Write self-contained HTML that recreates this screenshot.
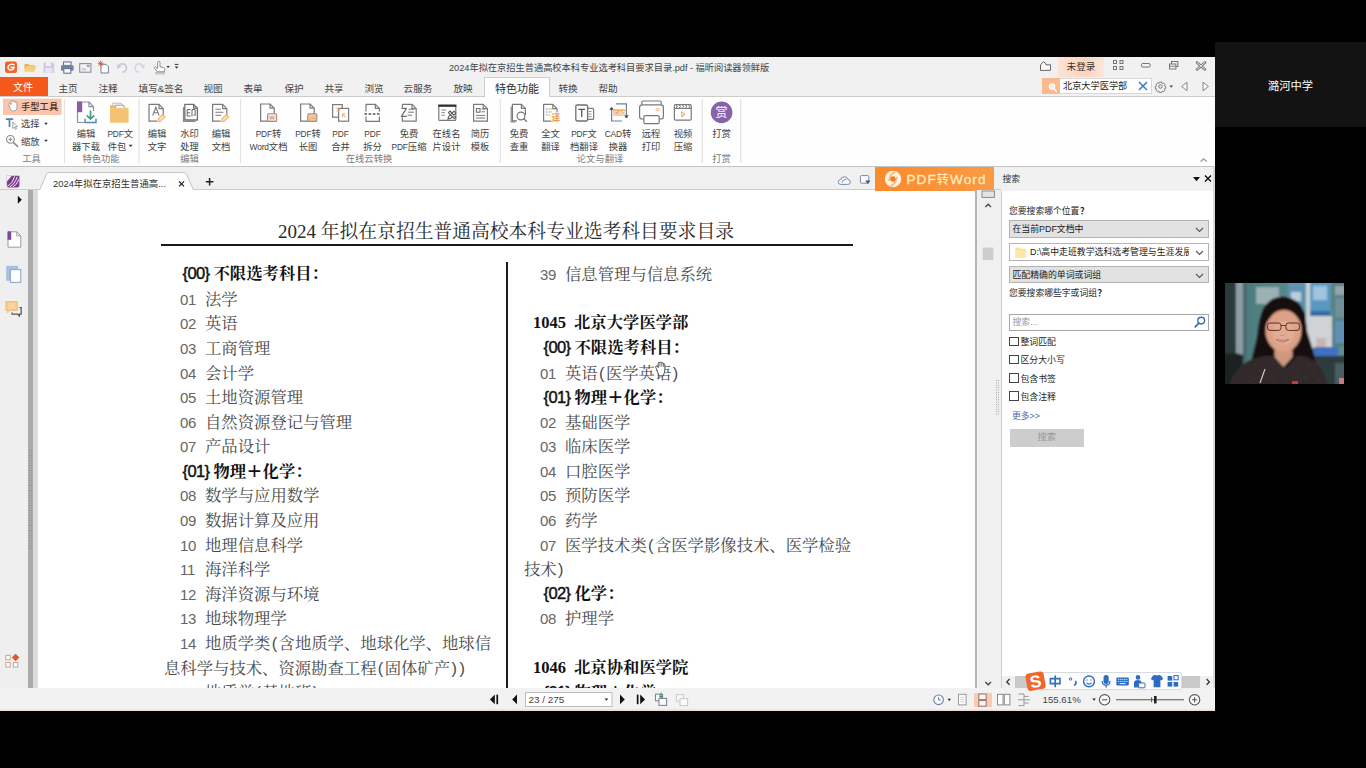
<!DOCTYPE html>
<html lang="zh-CN"><head><meta charset="utf-8"><title>2024年拟在京招生普通高校本科专业选考科目要求目录.pdf - 福昕阅读器领鲜版</title>
<style>
*{box-sizing:border-box;margin:0;padding:0}
html,body{width:1366px;height:768px;overflow:hidden;background:#000}
body{position:relative;font-family:"Liberation Sans","Noto Sans CJK SC",sans-serif;font-size:9.5px;color:#3a3a3a}
.a{position:absolute}
svg{position:absolute;overflow:visible}
#app{left:0;top:57px;width:1215px;height:654px;background:#f3f3f3;overflow:hidden}
#titlebar{left:0;top:0;width:1215px;height:20px;background:#f1f1f1}
#tabs{left:0;top:20px;width:1215px;height:19px;background:#f1f1f1}
#ribbon{left:0;top:39px;width:1215px;height:71px;background:#fefefe;border-top:1px solid #cbcbcb;border-bottom:1px solid #c4c4c4}
#doctabs{left:0;top:110px;width:1215px;height:23px;background:#f0f0f0}
#leftpanel{left:0;top:133px;width:28px;height:498px;background:#efefef}
#split1{left:28px;top:133px;width:5px;height:498px;background:#ababab}
#split2{left:33px;top:133px;width:5px;height:498px;background:#dcdcdc}
#page{left:38px;top:133px;width:937px;height:498px;background:#fff;overflow:hidden}
#status{left:0;top:631px;width:1215px;height:23px;background:#f2f2f2}
#name{left:1215px;top:42px;width:151px;height:85px;background:#131313;color:#fff;font-size:11.3px;text-align:center;line-height:88px}
#photo{left:1225px;top:283px;width:119px;height:101px;background:#5c8386;overflow:hidden}
.t{position:absolute;white-space:nowrap;line-height:1}
</style></head><body>
<div id="app" class="a">
<style>
#titlebar .ttl{left:449px;top:6.800px;font-size:9.280px;color:#444;letter-spacing:-0.05px}
#tabs .tb{position:absolute;top:1.5px;height:19px;line-height:20px;font-size:9.6px;color:#444;white-space:nowrap;transform:translateX(-50%)}
#filetab{left:0;top:0;width:48px;height:19px;background:#f4581b;color:#fff;font-size:10px;text-align:center;line-height:22px;padding-right:2px}
#acttab{left:484px;top:0;width:66px;height:20px;background:#fefefe;border:1px solid #cdcdcd;border-bottom:none;font-size:11px;color:#2c2c2c;text-align:center;line-height:22px;z-index:3}
#login{left:1058px;top:0;width:46px;height:20px;background:linear-gradient(90deg,#fce3d4,#fbd5c0 60%,#fce6da);font-size:9.6px;color:#333;text-align:center;line-height:20px}
#sbox{left:1042px;top:1px;width:110px;height:16px;background:#fbb98c}
#sbox .in{left:18px;top:0;width:92px;height:16px;background:#fff;border:1px solid #d8d8d8;border-left:none;font-size:9.200px;color:#222;line-height:15px;padding-left:3px;white-space:nowrap}
</style>
<div id="titlebar" class="a">
<svg width="190" height="20" viewBox="0 0 190 20" style="left:0;top:0">
 <!-- foxit logo -->
 <rect x="5" y="4.5" width="12" height="11.5" rx="2.2" fill="#f0652a"/>
 <path d="M14 7.6 C11.5 6.6 8.2 7.6 8 10.4 C7.9 12.6 10.4 13.6 12.6 12.6 C13.6 12.1 14 11.2 14 10.2 L11 10.4" fill="none" stroke="#fff" stroke-width="1.5" stroke-linecap="round"/>
 <!-- folder -->
 <path d="M24.5 7 h4 l1.2 1.3 h5.2 v1.4 h-8.6 l-1.8 4.8 z" fill="#e9b24f"/>
 <path d="M26.4 9.6 h10 l-2 5.2 h-9.9 z" fill="#f7cf7c"/>
 <!-- save -->
 <path d="M43.5 5.5 h9.3 l1.4 1.4 v8.8 h-10.7 z" fill="#cfc9e6"/>
 <rect x="45.8" y="5.5" width="5.2" height="3.6" fill="#f0eef8"/><rect x="45.3" y="11" width="7" height="4.7" fill="#e9e6f4"/>
 <!-- print -->
 <rect x="63.5" y="5" width="7.6" height="3.4" fill="#fff" stroke="#61779b" stroke-width="1.1"/>
 <rect x="61" y="8.2" width="12.6" height="5.6" rx="1" fill="#6e83a6"/>
 <rect x="63.8" y="11.6" width="7" height="4.6" fill="#fff" stroke="#61779b" stroke-width="1.1"/>
 <!-- mail/scan -->
 <rect x="79.7" y="6.6" width="11.2" height="8.6" fill="#f3f3f3" stroke="#8a8f99" stroke-width="1.1"/>
 <rect x="86.8" y="7.8" width="2.8" height="2.2" fill="#9aa0aa"/><rect x="81.6" y="11.2" width="4.6" height="2.2" fill="#c9ccd2"/>
 <!-- new doc with star -->
 <path d="M101 7.3 h5 l2.4 2.4 v6.3 h-7.4 z" fill="#fff" stroke="#7b7b86" stroke-width="1"/>
 <path d="M100.6 3.6 v6 M97.8 6.6 h5.6 M98.6 4.6 l4 4 M102.6 4.6 l-4 4" stroke="#e8553a" stroke-width="0.9"/>
 <!-- undo -->
 <path d="M118.6 9.8 C119.6 6 125.4 5.8 126.4 10 C126.9 12.6 125 14.8 122.4 15.4" fill="none" stroke="#c5ccd8" stroke-width="1.7"/>
 <path d="M116.4 7.2 l1.2 4.8 l4 -2.6 z" fill="#c5ccd8"/>
 <!-- redo -->
 <path d="M143 9.8 C142 6 136.2 5.8 135.2 10 C134.7 12.6 136.6 14.8 139.2 15.4" fill="none" stroke="#d3d9e2" stroke-width="1.7"/>
 <path d="M145.2 7.2 l-1.2 4.8 l-4 -2.6 z" fill="#d3d9e2"/>
 <!-- hand pointer -->
 <path d="M157.6 5.4 c0-1.4 2.4-1.4 2.4 0 v4.4 l3.6 .8 c1 .3 1.4 1 1.2 2 l-.6 2.2 h-6.8 l-3-3.600 c-.6-.9 .6-1.800 1.400-1.100 l1.800 1.500 z" fill="#fbfbfb" stroke="#8b8b8b" stroke-width="1"/>
 <rect x="155.800" y="15.400" width="8.600" height="1.600" fill="#d9d9d9" stroke="#9a9a9a" stroke-width=".5"/>
 <path d="M166.400 9 h3.400 l-1.700 2.100 z" fill="#333"/>
 <path d="M174.800 7.400 h3.600" stroke="#333" stroke-width="1"/><path d="M174.800 9.500 h3.600 l-1.800 2.200 z" fill="#333"/>
</svg>
<div class="t ttl">2024年拟在京招生普通高校本科专业选考科目要求目录.pdf - 福昕阅读器领鲜版</div>
<div id="login" class="a">未登录</div>
<svg width="180" height="20" viewBox="0 0 180 20" style="left:1035px;top:0">
 <path d="M5.500 8 l2.800-3.200 l2.600 1.800 v1.200 h4.600 v5.600 h-10 z" fill="#fdfdfd" stroke="#666" stroke-width="1"/>
 <g fill="none" stroke="#777" stroke-width="1"><rect x="78.500" y="3.500" width="3" height="3"/><rect x="85" y="3.500" width="3" height="3"/><rect x="78.500" y="9.500" width="3" height="3"/><rect x="85" y="9.500" width="3" height="3"/></g>
 <rect x="106.500" y="6.500" width="8.600" height="3.600" rx="1.200" fill="none" stroke="#777" stroke-width="1"/>
 <g fill="#f1f1f1" stroke="#777" stroke-width="1"><rect x="136.500" y="4.500" width="6.400" height="5"/><rect x="134.500" y="7" width="6.400" height="5"/></g>
 <path d="M135 9.300 h5.500" stroke="#777" stroke-width=".9"/>
</svg>
<svg width="14" height="14" viewBox="0 0 14 14" style="left:1194px;top:1.500px">
 <path d="M3 3.400 l8 7 M11 3.400 l-8 7" stroke="#777" stroke-width="2.600" stroke-linecap="round"/><path d="M3 3.400 l8 7 M11 3.400 l-8 7" stroke="#f1f1f1" stroke-width=".9" stroke-linecap="round"/>
</svg>
</div>
<div id="tabs" class="a">
<div id="filetab" class="a">文件</div>
<div class="tb" style="left:68px">主页</div>
<div class="tb" style="left:108px">注释</div>
<div class="tb" style="left:161px">填写&amp;签名</div>
<div class="tb" style="left:213px">视图</div>
<div class="tb" style="left:253px">表单</div>
<div class="tb" style="left:294px">保护</div>
<div class="tb" style="left:334px">共享</div>
<div class="tb" style="left:374px">浏览</div>
<div class="tb" style="left:418px">云服务</div>
<div class="tb" style="left:463px">放映</div>
<div id="acttab" class="a">特色功能</div>
<div class="tb" style="left:568px">转换</div>
<div class="tb" style="left:608px">帮助</div>
<div id="sbox" class="a">
 <svg width="18" height="16" viewBox="0 0 18 16" style="left:0;top:0"><circle cx="10" cy="8.600" r="2.700" fill="#fde9dc" stroke="#fff" stroke-width="1.100"/><path d="M12 10.800 l2.400 2.600" stroke="#fff" stroke-width="1.400" stroke-linecap="round"/></svg>
 <div class="in a">北京大学医学部</div>
 <svg width="12" height="12" viewBox="0 0 12 12" style="left:95px;top:2px"><path d="M2 2 l8 8 M10 2 l-8 8" stroke="#3b78c4" stroke-width="1.500"/></svg>
</div>
<svg width="60" height="18" viewBox="0 0 60 18" style="left:1153px;top:0px">
 <!-- gear -->
 <g transform="translate(7.500,9.500)" fill="none" stroke="#777" stroke-width="1"><circle r="1.700"/><path d="M-1.200-4.800 h2.400 l.5 1.500 l1.500-.5 l1.700 1.700 l-.7 1.400 l1.400 .6 v2.200 l-1.400 .5 l.6 1.500 l-1.700 1.600 l-1.400-.7 l-.5 1.500 h-2.400 l-.5-1.500 l-1.500 .7 l-1.700-1.700 l.7-1.400 l-1.500-.5 v-2.300 l1.500-.5 l-.7-1.500 l1.700-1.600 l1.500 .6 z" transform="scale(.92)"/></g>
 <path d="M16.500 8.500 h3.600 l-1.800 2.200 z" fill="#444"/>
 <path d="M34 5.200 v8.600 l-5.400-4.300 z" fill="#fafafa" stroke="#888" stroke-width="1"/>
 <path d="M50 5.200 v8.600 l5.400-4.300 z" fill="#fafafa" stroke="#888" stroke-width="1"/>
</svg>
</div>
<div id="ribbon" class="a"></div>
<svg width="1215" height="70" viewBox="0 0 1215 70" style="left:0;top:39px">
<rect x="3" y="2.600" width="58.600" height="16.400" fill="#f9c5ac"/>
<path d="M9.200 9.600 c-1.400-1.800 .6-2.800 1.500-1.500 l.3 .4 v-3 c0-1.200 1.500-1.200 1.600 0 c.2-1.100 1.600-1 1.600 .2 c.3-.9 1.500-.7 1.500 .4 v.600 c.3-.8 1.300-.6 1.300 .4 v4 c0 2.400-1 4-3.600 4 c-2.200 0-3-1.400-4.200-5.500 z" fill="#fdfdfd" stroke="#9a948f" stroke-width=".9" stroke-linejoin="round"/>
<path d="M5.800 23.200 h7.400 M9.500 23.200 v7.800" stroke="#5680ad" stroke-width="1.700" fill="none"/>
<path d="M12.800 26 v6.600 l1.600-1.500 l1.100 2.300 l1-.5 l-1.100-2.200 h2.100 z" fill="#fff" stroke="#8b8b8b" stroke-width=".8" stroke-linejoin="round"/>
<path d="M44.200 26.800 h3.600 l-1.800 2.200 z M44.200 43.800 h3.600 l-1.800 2.200 z" fill="#333"/>
<circle cx="10.400" cy="43.400" r="3.900" fill="#fdfdfd" stroke="#8b8b8b" stroke-width="1.100"/><path d="M8.400 43.400 h4 M10.400 41.400 v4" stroke="#8b8b8b" stroke-width="1"/><path d="M13.300 46.400 l4.300 4" stroke="#8b8b8b" stroke-width="1.500" stroke-linecap="round"/>
<path d="M64.5 3 V67" stroke="#e3e3e3" stroke-width="1.200"/>
<path d="M139.0 3 V67" stroke="#e3e3e3" stroke-width="1.200"/>
<path d="M240.5 3 V67" stroke="#e3e3e3" stroke-width="1.200"/>
<path d="M500.3 3 V67" stroke="#e3e3e3" stroke-width="1.200"/>
<path d="M702.3 3 V67" stroke="#e3e3e3" stroke-width="1.200"/>
<path d="M740.7 3 V67" stroke="#e3e3e3" stroke-width="1.200"/>
<path d="M77.5 6.0 h11.4 l4.6 4.6 v15.9 h-16.0 z" fill="#fefefe" stroke="#8f8f9a" stroke-width="1.2" stroke-linejoin="round"/><path d="M88.9 6.0 v4.6 h4.6" fill="none" stroke="#8f8f9a" stroke-width="1.2" stroke-linejoin="round"/>
<rect x="77" y="5.600" width="5.200" height="10.600" fill="#8a5ca9"/>
<rect x="84" y="15" width="13" height="12.500" fill="#fefefe"/>
<path d="M90.500 14.600 v8 M86.800 19.400 l3.700 3.600 l3.700-3.600" fill="none" stroke="#3f9c8c" stroke-width="1.700"/>
<path d="M85 22.800 v3.700 h11 v-3.700" fill="none" stroke="#5f86a8" stroke-width="1.500"/>
<path d="M112.500 8.800 v-1.600 h8.600 l3 3 v3" fill="#fefefe" stroke="#b9b9b9" stroke-width="1"/>
<path d="M115 11 v-1.800 h7.400 l2.700 2.700 v3" fill="#fefefe" stroke="#9a9a9a" stroke-width="1"/>
<path d="M110 9.600 h5 l1.600 2.200 h11.800 v14.800 h-18.400 z" fill="#f5cb80"/>
<rect x="110" y="13.300" width="18.400" height="13.300" fill="#f3c373"/>
<path d="M110 9.600 h5 l1.600 2.200 h-6.600 z" fill="#e9b65e"/>
<path d="M149.0 8.4 h10.0 l4.2 4.2 v12.6 h-14.2 z" fill="#fefefe" stroke="#7a7a7a" stroke-width="1.2" stroke-linejoin="round"/><path d="M159.0 8.4 v4.2 h4.2" fill="none" stroke="#7a7a7a" stroke-width="1.2" stroke-linejoin="round"/>
<path d="M152.600 19.600 l3.300-8.400 l3.300 8.400 M153.700 16.800 h4.500" fill="none" stroke="#777" stroke-width="1.100"/>
<rect x="157" y="20" width="8" height="7" fill="#fefefe"/>
<g transform="translate(158.0,25.6) rotate(-45)"><path d="M0 0 l2.200-1.700 h6.200 v3.400 h-6.200 z" fill="#f8dfb5" stroke="#eab766" stroke-width="1"/></g>
<path d="M183.500 11 v14.400 h12" fill="none" stroke="#8a8a8a" stroke-width="1.200"/>
<path d="M184.8 8.4 h8.8 l3.8 3.8 v11.8 h-12.6 z" fill="#fefefe" stroke="#6e6e6e" stroke-width="1.3" stroke-linejoin="round"/><path d="M193.6 8.4 v3.8 h3.8" fill="none" stroke="#6e6e6e" stroke-width="1.3" stroke-linejoin="round"/>
<path d="M187.200 13.600 h3.400 M187.200 13.600 v6.400 h3.400 M187.200 16.800 h3 M192 20.400 v-6.800 h3.200 v5.600 h-1.600" fill="none" stroke="#666" stroke-width="1"/>
<path d="M212.6 8.4 h10.0 l4.2 4.2 v12.6 h-14.2 z" fill="#fefefe" stroke="#7a7a7a" stroke-width="1.2" stroke-linejoin="round"/><path d="M222.6 8.4 v4.2 h4.2" fill="none" stroke="#7a7a7a" stroke-width="1.2" stroke-linejoin="round"/>
<path d="M215.400 13.200 h5.400 M215.400 16.200 h8 M215.400 19.200 h5.600" stroke="#777" stroke-width="1.100"/>
<rect x="220.500" y="20" width="8" height="7" fill="#fefefe"/>
<g transform="translate(221.6,25.6) rotate(-45)"><path d="M0 0 l2.200-1.700 h6.200 v3.400 h-6.200 z" fill="#f8dfb5" stroke="#eab766" stroke-width="1"/></g>
<path d="M260.6 8.0 h9.4 l4.2 4.2 v13.0 h-13.6 z" fill="#fefefe" stroke="#7a7a7a" stroke-width="1.2" stroke-linejoin="round"/><path d="M270.0 8.0 v4.2 h4.2" fill="none" stroke="#7a7a7a" stroke-width="1.2" stroke-linejoin="round"/>
<rect x="267.600" y="17.800" width="9" height="7.600" rx="1" fill="#f8e4d6" stroke="#a88a7c" stroke-width="1.100"/>
<path d="M269.800 20 l1 3.400 l1.200-3 l1.200 3 l1-3.400" fill="none" stroke="#b89a8c" stroke-width=".8"/>
<path d="M300.6 8.0 h9.4 l4.2 4.2 v13.0 h-13.6 z" fill="#fefefe" stroke="#7a7a7a" stroke-width="1.2" stroke-linejoin="round"/><path d="M310.0 8.0 v4.2 h4.2" fill="none" stroke="#7a7a7a" stroke-width="1.2" stroke-linejoin="round"/>
<rect x="307.800" y="17.800" width="9" height="7.600" rx="1" fill="#f5c79e" stroke="#a88a7c" stroke-width="1.100"/>
<path d="M309.600 23.600 l2-2.400 l1.400 1.400 l1-1 l1.600 2" fill="none" stroke="#e09a5c" stroke-width=".8"/>
<rect x="332.600" y="8.600" width="9.600" height="12.600" fill="#fefefe" stroke="#7a7a7a" stroke-width="1.200"/>
<rect x="338.600" y="12.400" width="10" height="12.800" fill="#fefefe" stroke="#7a7a7a" stroke-width="1.200"/>
<path d="M336 11.400 l3.400 3.600 M339.400 12.200 v2.800 h-2.800 M345.800 21.600 l-3.400-3.600 M342.400 20.800 v-2.800 h2.800" fill="none" stroke="#e9a56a" stroke-width="1"/>
<path d="M366 15.600 v-7.200 h9.400 l4 4 v3.200 M366 20.400 v5 h13.400 v-5" fill="#fefefe" stroke="#7a7a7a" stroke-width="1.200" stroke-linejoin="round"/>
<path d="M375.400 8.400 v4 h4" fill="none" stroke="#7a7a7a" stroke-width="1.200"/>
<path d="M364.400 18 h16.600" stroke="#555" stroke-width="1.500" stroke-dasharray="2.600 1.600"/>
<path d="M402.4 8.4 h9.6 l4.2 4.2 v12.6 h-13.8 z" fill="#fefefe" stroke="#7a7a7a" stroke-width="1.2" stroke-linejoin="round"/><path d="M412.0 8.4 v4.2 h4.2" fill="none" stroke="#7a7a7a" stroke-width="1.2" stroke-linejoin="round"/>
<rect x="400" y="11.600" width="6.400" height="9.600" fill="#fefefe"/>
<path d="M401.400 12.400 h5 l-5 8 h5.400" fill="none" stroke="#6e6e6e" stroke-width="1.200" stroke-linejoin="round"/>
<path d="M408.600 13.200 h5.400 M408.200 16.200 h5.800 M407.600 19.200 h4.600" stroke="#777" stroke-width="1"/>
<rect x="438.800" y="9.400" width="17" height="15" rx="1" fill="#fefefe" stroke="#7a7a7a" stroke-width="1.200"/>
<rect x="438.200" y="8.600" width="18.200" height="2.200" fill="#2e2e2e"/>
<path d="M441.400 14 h4.600 M441.400 16.600 h3.400 M441.400 19.200 h3.400" stroke="#888" stroke-width="1"/>
<path d="M447.800 23.200 l1-2.800 l5.200-5.200 l1.900 1.900 l-5.200 5.200 z M448.400 16.600 l1.600-1.600 l5.800 6 l-1.600 1.600 z" fill="#fefefe" stroke="#5c5c5c" stroke-width="1.100" stroke-linejoin="round"/>
<path d="M473.6 8.4 h9.6 l4.2 4.2 v12.6 h-13.8 z" fill="#fefefe" stroke="#7a7a7a" stroke-width="1.2" stroke-linejoin="round"/><path d="M483.2 8.4 v4.2 h4.2" fill="none" stroke="#7a7a7a" stroke-width="1.2" stroke-linejoin="round"/>
<rect x="476.400" y="12.600" width="3.600" height="3.600" fill="none" stroke="#666" stroke-width="1"/>
<path d="M481.600 13 h3.400 M481.600 15.800 h3.400 M476 19.400 h9.200 M476 22 h9.200" stroke="#777" stroke-width="1"/>
<path d="M511.200 10.400 v15.400 h4" fill="none" stroke="#8a8a8a" stroke-width="1.200"/>
<path d="M512.4 8.4 h9.0 l4.0 4.0 v12.4 h-13.0 z" fill="#fefefe" stroke="#7a7a7a" stroke-width="1.2" stroke-linejoin="round"/><path d="M521.4 8.4 v4.0 h4.0" fill="none" stroke="#7a7a7a" stroke-width="1.2" stroke-linejoin="round"/>
<rect x="517" y="19" width="10" height="8" fill="#fefefe"/>
<circle cx="521" cy="20" r="3.900" fill="#fefefe" stroke="#777" stroke-width="1.200"/><path d="M523.800 22.800 l2.800 2.600" stroke="#777" stroke-width="1.300" stroke-linecap="round"/>
<path d="M543.6 8.4 h9.2 l4.2 4.2 v12.6 h-13.4 z" fill="#fefefe" stroke="#7a7a7a" stroke-width="1.2" stroke-linejoin="round"/><path d="M552.8 8.4 v4.2 h4.2" fill="none" stroke="#7a7a7a" stroke-width="1.2" stroke-linejoin="round"/>
<path d="M546 13 h1.400 M546 16 h1.400 M546 19 h1.400" stroke="#5b86b8" stroke-width="1.100"/>
<path d="M548.600 13 h4.400 M548.600 16 h3.200 M548.600 19 h2" stroke="#e7a462" stroke-width="1.100"/>
<rect x="551.400" y="16.400" width="8.600" height="9.400" fill="#fefefe"/>
<text x="551.400" y="24.800" font-size="8.600" fill="#eb9a4e" font-family="Liberation Sans,Noto Sans CJK SC,sans-serif" font-weight="700">译</text>
<rect x="584.600" y="12.400" width="9" height="11" rx="1" fill="#fefefe" stroke="#7a7a7a" stroke-width="1.200"/>
<path d="M588.600 15.400 h3 M588.600 18 h3 M588.600 20.600 h3" stroke="#888" stroke-width=".9"/>
<rect x="575.800" y="9" width="11.800" height="16" rx="1.400" fill="#fefefe" stroke="#6e6e6e" stroke-width="1.300"/>
<path d="M578.400 13.400 h6.600 M581.700 13.400 v7.600" stroke="#555" stroke-width="1.300"/>
<path d="M616 7.800 h10.400 v13.200 M624.600 19 l1.800 2.200 l1.800-2.200" fill="none" stroke="#6c7f96" stroke-width="1.200"/>
<path d="M622 25 h-10.400 v-13.200 M609.800 13.800 l1.800-2.200 l1.800 2.200" fill="none" stroke="#6c7f96" stroke-width="1.200"/>
<path d="M626.400 19.400 l-1.600 2 h3.200 z M611.600 11.400 l-1.600 2 h3.200 z" fill="#333"/>
<rect x="613.400" y="13.400" width="11.600" height="6.200" fill="#f5a85a"/>
<text x="614" y="18.600" font-size="5.400" fill="#fff3e4" font-weight="700" font-family="Liberation Sans,sans-serif">CAD</text>
<path d="M641.800 8.800 v-2.600 q0-1.200 1.200-1.200 h17 q1.200 0 1.200 1.200 v2.600" fill="#fefefe" stroke="#7a7a7a" stroke-width="1.200"/>
<rect x="639.600" y="8.800" width="23.800" height="14.200" rx="2.600" fill="#fefefe" stroke="#7a7a7a" stroke-width="1.200"/>
<rect x="643.800" y="19.600" width="15.400" height="8" rx="1.400" fill="#fefefe" stroke="#7a7a7a" stroke-width="1.200"/>
<rect x="656" y="12.600" width="3.400" height="2" rx=".6" fill="#fff" stroke="#eeb07a" stroke-width=".9"/>
<rect x="674.400" y="8.600" width="16.800" height="15.600" rx="1.200" fill="#fefefe" stroke="#7a7a7a" stroke-width="1.200"/>
<path d="M674.400 12.400 h16.800" stroke="#7a7a7a" stroke-width="1.100"/>
<path d="M676 9.400 l1.400 1.200 l-1.400 1.200 M679.200 9.400 l1.400 1.200 l-1.400 1.200 M682.400 9.400 l1.400 1.200 l-1.400 1.200 M685.600 9.400 l1.400 1.200 l-1.400 1.200 M688.600 9.400 l1.400 1.200 l-1.400 1.200" fill="none" stroke="#555" stroke-width=".9"/>
<path d="M681.600 15.600 v5.200 l3.400-2.600 z" fill="#fff8ee" stroke="#efb673" stroke-width="1.100" stroke-linejoin="round"/>
<circle cx="721.600" cy="16.400" r="10.800" fill="#8763ab"/>
<text x="721.600" y="20.800" font-size="12" fill="#f1e9f7" text-anchor="middle" font-family="Liberation Sans,Noto Sans CJK SC,sans-serif" font-weight="500">赏</text>
<path d="M1200.600 65.600 l3-2.800 l3 2.800" fill="none" stroke="#999" stroke-width="1.300"/>
</svg>
<style>
.rl{position:absolute;transform:translateX(-50%);white-space:nowrap;text-align:center;font-size:9.300px;line-height:12.300px;color:#414141;top:71.300px}
.rl i{font-style:normal;font-size:8.400px;letter-spacing:-0.150px}
.gl{position:absolute;transform:translateX(-50%);white-space:nowrap;font-size:9.300px;line-height:12px;color:#7b7b7b;top:95.600px}
.sl{position:absolute;white-space:nowrap;font-size:9.300px;line-height:12px;color:#3c3c3c;left:21px}
</style>
<div class="rl" style="left:86.0px">编辑<br>器下载</div>
<div class="rl" style="left:120.2px"><i>PDF</i>文<br>件包<svg width="5" height="4" viewBox="0 0 5 4" style="position:static;margin-left:1.500px;vertical-align:2px"><path d="M.5 .7 h4 l-2 2.400 z" fill="#333"/></svg></div>
<div class="rl" style="left:157.0px">编辑<br>文字</div>
<div class="rl" style="left:189.5px">水印<br>处理</div>
<div class="rl" style="left:221.0px">编辑<br>文档</div>
<div class="rl" style="left:268.5px"><i>PDF</i>转<br><i>Word</i>文档</div>
<div class="rl" style="left:308.0px"><i>PDF</i>转<br>长图</div>
<div class="rl" style="left:340.5px"><i>PDF</i><br>合并</div>
<div class="rl" style="left:372.5px"><i>PDF</i><br>拆分</div>
<div class="rl" style="left:409.0px">免费<br><i>PDF</i>压缩</div>
<div class="rl" style="left:446.5px">在线名<br>片设计</div>
<div class="rl" style="left:480.0px">简历<br>模板</div>
<div class="rl" style="left:519.0px">免费<br>查重</div>
<div class="rl" style="left:550.5px">全文<br>翻译</div>
<div class="rl" style="left:584.0px"><i>PDF</i>文<br>档翻译</div>
<div class="rl" style="left:618.0px"><i>CAD</i>转<br>换器</div>
<div class="rl" style="left:651.0px">远程<br>打印</div>
<div class="rl" style="left:683.0px">视频<br>压缩</div>
<div class="rl" style="left:721.5px">打赏<br></div>
<div class="gl" style="left:31.5px">工具</div>
<div class="gl" style="left:101.0px">特色功能</div>
<div class="gl" style="left:189.5px">编辑</div>
<div class="gl" style="left:369.0px">在线云转换</div>
<div class="gl" style="left:600.0px">论文与翻译</div>
<div class="gl" style="left:721.5px">打赏</div>
<div class="sl" style="top:43.800px;color:#4a2f22;font-weight:500">手型工具</div>
<div class="sl" style="top:61.200px">选择</div>
<div class="sl" style="top:78.600px">缩放</div>
<div id="doctabs" class="a"></div>
<div id="leftpanel" class="a"></div><div id="split1" class="a"></div><div id="split2" class="a"></div>
<style>
#page{font-family:"Liberation Sans","Noto Serif CJK SC",serif;font-size:16.35px;color:#4a4a4a}
#page .r{position:absolute;white-space:nowrap;line-height:24.6px;height:24.6px;font-weight:400}
#page .n{display:inline-block;width:25px;font-size:15px;color:#666;letter-spacing:-0.3px}
#page .h{font-weight:700;color:#111;margin-top:-1px}
#page .pl{font-family:"Noto Sans CJK SC",sans-serif;font-weight:700}
#page .p{display:inline-block;width:8.200px;text-align:center}
#page .b{display:inline-block;width:31px;font-size:16.500px;font-weight:400;-webkit-text-stroke:0.450px #111;letter-spacing:-0.600px;margin-left:-.500px}
#page .sn{display:inline-block;width:41px;font-family:"Liberation Serif",serif;font-size:16.5px}
#ptitle{left:-1px;width:938px;top:28.3px;height:28px;line-height:28px;text-align:center;font-size:18.8px;color:#2a2a2a;white-space:nowrap;padding-right:0}
#ptitle span{font-family:"Liberation Serif",serif;font-size:19px}
</style>
<div id="page" class="a">
<div id="ptitle" class="a"><span>2024 </span>年拟在京招生普通高校本科专业选考科目要求目录</div>
<div class="a" style="left:123px;top:54px;width:692px;height:2px;background:#1a1a1a"></div>
<div class="a" style="left:468px;top:72px;width:2px;height:440px;background:#1a1a1a"></div>
<div class="r h" style="top:72.1px;left:145px"><span class="b">{00}</span>不限选考科目：</div>
<div class="r" style="top:96.7px;left:142px"><span class="n">01</span>法学</div>
<div class="r" style="top:121.3px;left:142px"><span class="n">02</span>英语</div>
<div class="r" style="top:145.9px;left:142px"><span class="n">03</span>工商管理</div>
<div class="r" style="top:170.5px;left:142px"><span class="n">04</span>会计学</div>
<div class="r" style="top:195.1px;left:142px"><span class="n">05</span>土地资源管理</div>
<div class="r" style="top:219.6px;left:142px"><span class="n">06</span>自然资源登记与管理</div>
<div class="r" style="top:244.2px;left:142px"><span class="n">07</span>产品设计</div>
<div class="r h" style="top:268.8px;left:145px"><span class="b">{01}</span>物理<span class="pl">＋</span>化学：</div>
<div class="r" style="top:293.4px;left:142px"><span class="n">08</span>数学与应用数学</div>
<div class="r" style="top:318.0px;left:142px"><span class="n">09</span>数据计算及应用</div>
<div class="r" style="top:342.6px;left:142px"><span class="n">10</span>地理信息科学</div>
<div class="r" style="top:367.2px;left:142px"><span class="n">11</span>海洋科学</div>
<div class="r" style="top:391.8px;left:142px"><span class="n">12</span>海洋资源与环境</div>
<div class="r" style="top:416.4px;left:142px"><span class="n">13</span>地球物理学</div>
<div class="r" style="top:440.9px;left:142px"><span class="n">14</span>地质学类<span class="p">(</span>含地质学、地球化学、地球信</div>
<div class="r" style="top:465.5px;left:126px">息科学与技术、资源勘查工程<span class="p">(</span>固体矿产<span class="p">)</span><span class="p">)</span></div>
<div class="r" style="top:490.1px;left:142px"><span class="n">15</span>地质学<span class="p">(</span>基地班<span class="p">)</span></div>
<div class="r" style="top:72.1px;left:502px"><span class="n">39</span>信息管理与信息系统</div>
<div class="r h" style="top:121.3px;left:495px"><span class="sn">1045</span>北京大学医学部</div>
<div class="r h" style="top:145.9px;left:506px"><span class="b">{00}</span>不限选考科目：</div>
<div class="r" style="top:170.5px;left:502px"><span class="n">01</span>英语<span class="p">(</span>医学英语<span class="p">)</span></div>
<div class="r h" style="top:195.1px;left:506px"><span class="b">{01}</span>物理<span class="pl">＋</span>化学：</div>
<div class="r" style="top:219.6px;left:502px"><span class="n">02</span>基础医学</div>
<div class="r" style="top:244.2px;left:502px"><span class="n">03</span>临床医学</div>
<div class="r" style="top:268.8px;left:502px"><span class="n">04</span>口腔医学</div>
<div class="r" style="top:293.4px;left:502px"><span class="n">05</span>预防医学</div>
<div class="r" style="top:318.0px;left:502px"><span class="n">06</span>药学</div>
<div class="r" style="top:342.6px;left:502px"><span class="n">07</span>医学技术类<span class="p">(</span>含医学影像技术、医学检验</div>
<div class="r" style="top:367.2px;left:486px">技术<span class="p">)</span></div>
<div class="r h" style="top:391.8px;left:506px"><span class="b">{02}</span>化学：</div>
<div class="r" style="top:416.4px;left:502px"><span class="n">08</span>护理学</div>
<div class="r h" style="top:465.5px;left:495px"><span class="sn">1046</span>北京协和医学院</div>
<div class="r h" style="top:490.1px;left:506px"><span class="b">{01}</span>物理<span class="pl">＋</span>化学：</div>
</div>
<style>
#doctabs{border-bottom:1px solid #cdcdcd}
#dtab{left:0;top:109px}
#dttext{left:53px;top:121.600px;font-size:9.400px;color:#333}
#pdfw{left:875px;top:109.500px;width:119px;height:24.200px;background:linear-gradient(90deg,#fb8a2c,#fa9a45);color:#ffe9bd;font-size:13.600px;letter-spacing:1.050px;line-height:26px;padding-left:31.500px;white-space:nowrap;font-weight:400;-webkit-text-stroke:.350px #ffe9bd}
#vsb{left:975px;top:133px;width:26px;height:498px;background:#f0f0f0;border-left:2px solid #b4b4b4}
#sph{left:1001px;top:110px;width:214px;height:23px;background:#f1f1f1}
#sp{left:1001px;top:134px;width:212px;height:497px;background:#fff;border-left:1px solid #d0d0d0}
#sprb{left:1213px;top:110px;width:2px;height:544px;background:#d9d9d9}
.lb{position:absolute;left:1009px;font-size:8.800px;color:#1e1e1e;white-space:nowrap;line-height:12px}
.dd{position:absolute;left:1009px;width:199.500px;height:17.500px;background:#e2e2e2;border:1px solid #b3b3b3;font-size:8.900px;color:#1a1a1a;line-height:16.500px;padding-left:2.500px;white-space:nowrap;overflow:hidden}
.dd svg{right:3.500px;top:5.500px}
.cb{position:absolute;left:1009px;width:9.500px;height:9.500px;background:#fff;border:1px solid #444}
.cl{position:absolute;left:1020.500px;font-size:8.900px;color:#1e1e1e;white-space:nowrap;line-height:12px}
.lb b{font-weight:700;margin-left:.500px}
</style>
<svg id="dtab" width="240" height="24" viewBox="0 0 240 24">
 <path d="M39.500 24 L46.600 8 Q47.400 6.500 49.400 6.500 H183.600 Q185.600 6.500 186.400 8 L193.500 24" fill="#fdfdfd" stroke="#c4c4c4" stroke-width="1"/>
 <!-- purple app icon -->
 <path d="M6.800 9.800 h12.600 v9.800 q0 2-2 2 h-8.600 q-2 0-2-2 z" fill="#7a3d8c"/>
 <path d="M7.400 20 q4.600-1.600 7.200-9.600 M9.800 20.800 q5-2.400 7.400-10 M12.800 21 q4.200-2 6-7.600" fill="none" stroke="#f3e9f6" stroke-width="1"/>
 <path d="M6.800 9.800 h5 l-5 6 z" fill="#f1f1f1"/>
 <!-- close x -->
 <path d="M179 15.400 l5 5 M184 15.400 l-5 5" stroke="#222" stroke-width="1.300"/>
 <!-- plus -->
 <path d="M205.800 15.700 h7.600 M209.600 11.900 v7.600" stroke="#222" stroke-width="1.500"/>
</svg>
<div id="dttext" class="t">2024年拟在京招生普通高...</div>
<svg width="40" height="16" viewBox="0 0 40 16" style="left:836px;top:115px">
 <path d="M4.600 12.400 q-2.600-.2-2.400-2.600 q.2-2 2.400-2 q.6-3 3.800-3 q2.800 0 3.600 2.600 q2.600 .4 2.400 2.800 q-.2 2.200-2.600 2.200 z" fill="#f7f9fc" stroke="#7688a6" stroke-width="1"/>
 <path d="M6 11 q.4-3.600 4.600-3.800" fill="none" stroke="#7688a6" stroke-width=".9"/>
 <rect x="24.400" y="3.600" width="8.400" height="7.600" rx="1" fill="#fbfcfe" stroke="#7688a6" stroke-width="1"/>
 <path d="M29.200 8.600 h5.200 l-2.600 3.400 z" fill="#3d5a8a"/>
</svg>
<div id="pdfw" class="a">PDF<span style="font-size:12.200px;font-weight:500;-webkit-text-stroke:0">转</span>Word</div>
<svg width="20" height="20" viewBox="0 0 20 20" style="left:882.500px;top:112px">
 <circle cx="10" cy="10" r="8.200" fill="#fff4e4"/>
 <path d="M12.600 2.400 q-5.600 2.400-6.800 9.600 M7.200 17.600 q5.800-2.600 6.800-9.400" fill="none" stroke="#fbb878" stroke-width="1.600"/>
 <circle cx="10" cy="10" r="2.700" fill="#f47a20"/>
</svg>
<!-- left panel -->
<svg width="28" height="498" viewBox="0 0 28 498" style="left:0;top:133px">
 <path d="M17.800 5.800 v8 l4-4 z" fill="#111"/>
 <!-- bookmark doc -->
 <path d="M8 41.800 h8.800 l4 4 v11.400 h-12.800 z" fill="#fefefe" stroke="#9a9a9a" stroke-width="1"/>
 <path d="M16.800 41.800 v4 h4" fill="none" stroke="#9a9a9a" stroke-width="1"/>
 <rect x="7.600" y="41.400" width="3.600" height="8.400" fill="#7a4a9a"/>
 <!-- pages -->
 <path d="M6.800 76.400 h10.800 v3 h-8 v10.800 h-2.800 z" fill="#aac3df" stroke="#8fb0d4" stroke-width=".8"/>
 <rect x="10.400" y="79.600" width="10.400" height="12.800" fill="#fdfeff" stroke="#8fa9cb" stroke-width="1.100"/>
 <!-- comments -->
 <path d="M5.800 111.600 h11.600 v8.800 h-7.800 l-2 2.400 v-2.400 h-1.800 z" fill="#f8c988" stroke="#f2b86a" stroke-width=".8"/>
 <path d="M7.800 114 h7.600 M7.800 116 h7.600 M7.800 118 h7.600" stroke="#fbe3bd" stroke-width=".9"/>
 <path d="M19.400 117.600 h1.800 v6.600 h-1.800 l0 1.800 l-1.800-1.800 h-5.600 v-1.600" fill="none" stroke="#555" stroke-width="1.200"/>
 <!-- bottom grid -->
 <g fill="#fefefe" stroke="#c9a596" stroke-width="1"><rect x="5.800" y="465.400" width="4.400" height="4.400"/><rect x="5.800" y="472.600" width="4.400" height="4.400"/><rect x="13.400" y="472.600" width="4.400" height="4.400"/></g>
 <path d="M15.600 463.800 l3.800 3.700 l-3.800 3.700 l-3.800-3.700 z" fill="#e2582c"/>
</svg>
<!-- splitter grips -->
<svg width="10" height="100" viewBox="0 0 10 100" style="left:28px;top:393px"><path d="M1.500 0 V100 M3.500 0 V100" stroke="#8f8f8f" stroke-width="1" stroke-dasharray="1 1.500"/></svg>
<!-- vertical scrollbar -->
<div id="vsb" class="a"></div>
<svg width="24" height="498" viewBox="0 0 24 498" style="left:977px;top:133px">
 <rect x="5" y="1" width="12.400" height="6.400" fill="#e4e4e4" stroke="#8a8a8a" stroke-width="1"/>
 <path d="M8.400 17 l2.800-2.800 l2.800 2.800" fill="none" stroke="#444" stroke-width="1.300"/>
 <rect x="5.600" y="57.600" width="10.800" height="12.400" fill="#cdcdcd"/>
 <path d="M8.400 492 l2.800 2.800 l2.800-2.800" fill="none" stroke="#444" stroke-width="1.300"/>
 <path d="M19.500 190 V226 M21.500 190 V226" stroke="#a8a8a8" stroke-width="1" stroke-dasharray="1 1.400"/>
</svg>
<!-- search panel -->
<div id="sph" class="a"></div>
<div class="t" style="left:1002.500px;top:117.800px;font-size:8.800px;color:#333">搜索</div>
<svg width="24" height="12" viewBox="0 0 24 12" style="left:1191px;top:116px"><path d="M2 4 h7 l-3.500 4.200 z" fill="#111"/><path d="M14 2.400 l6 6 M20 2.400 l-6 6" stroke="#111" stroke-width="1.400"/></svg>
<div id="sp" class="a"></div>
<div id="sprb" class="a"></div>
<div class="lb" style="top:148.400px">您要搜索哪个位置<b>？</b></div>
<div class="dd" style="top:163.300px">在当前PDF文档中<svg width="9" height="6" viewBox="0 0 9 6"><path d="M1 1 l3.500 3.500 l3.500-3.500" fill="none" stroke="#555" stroke-width="1.100"/></svg></div>
<div class="dd" style="top:186px;background:#fff;padding-left:20px;line-height:16px;height:18px">D:\高中走班教学选科选考管理与生涯发展<span class="a" style="right:0;top:0;width:19px;height:16px;background:#fff"></span><svg width="9" height="6" viewBox="0 0 9 6"><path d="M1 1 l3.500 3.500 l3.500-3.500" fill="none" stroke="#555" stroke-width="1.100"/></svg></div>
<svg width="14" height="14" viewBox="0 0 14 14" style="left:1014px;top:188.500px"><path d="M1.500 1.500 h4 l1 1.200 h5.500 v9.300 h-10.500 z" fill="#fbe08a"/><rect x="1.500" y="3.600" width="10.500" height="8.400" fill="#fde9a4"/></svg>
<div class="dd" style="top:209px;height:17px">匹配精确的单词或词组<svg width="9" height="6" viewBox="0 0 9 6"><path d="M1 1 l3.500 3.500 l3.500-3.500" fill="none" stroke="#555" stroke-width="1.100"/></svg></div>
<div class="lb" style="top:230px">您要搜索哪些字或词组<b>？</b></div>
<div class="dd" style="top:257px;height:16.500px;background:#fff;color:#9a9a9a;border-color:#a6a6a6;line-height:15px">搜索...</div>
<svg width="14" height="14" viewBox="0 0 14 14" style="left:1193px;top:258px"><circle cx="8.200" cy="5.600" r="3.400" fill="#fff" stroke="#3a6ea8" stroke-width="1.400"/><path d="M5.800 8.200 l-3.600 3.600" stroke="#3a6ea8" stroke-width="1.700" stroke-linecap="round"/></svg>
<div class="cb" style="top:279.700px"></div><div class="cl" style="top:279px">整词匹配</div>
<div class="cb" style="top:297.900px"></div><div class="cl" style="top:297.200px">区分大小写</div>
<div class="cb" style="top:316.200px"></div><div class="cl" style="top:315.600px">包含书签</div>
<div class="cb" style="top:334.300px"></div><div class="cl" style="top:333.600px">包含注释</div>
<div class="lb" style="left:1012px;top:353.200px;color:#3e6aa3">更多&gt;&gt;</div>
<div class="a" style="left:1009.500px;top:372px;width:74.500px;height:17.500px;background:#cdcdcd;color:#9a9a9a;font-size:9.300px;text-align:center;line-height:17.500px">搜索</div>
<!-- search panel hscroll -->
<div class="a" style="left:1002px;top:618.500px;width:211px;height:12px;background:#f0f0f0"></div>
<div class="a" style="left:1014.700px;top:618.500px;width:185px;height:12px;background:#c9c9c9"></div>
<svg width="212" height="12" viewBox="0 0 212 12" style="left:1002px;top:618.500px"><path d="M7.600 3 l-2.800 2.900 l2.800 2.900" fill="none" stroke="#333" stroke-width="1.300"/><path d="M204.600 3 l2.800 2.900 l-2.800 2.900" fill="none" stroke="#333" stroke-width="1.300"/></svg>
<!-- IME bar -->
<div class="a" style="left:1040px;top:615px;width:141.500px;height:17.600px;background:#fdfdfd;border:1px solid #d5dbe3;border-radius:2px;z-index:5"></div>
<svg width="160" height="24" viewBox="0 0 160 24" style="left:1024px;top:612px;z-index:6">
 <g transform="rotate(-10 11.500 12.500)"><rect x="2.400" y="3.400" width="18.400" height="17.600" rx="3.400" fill="#f1662a"/>
 <text x="11.600" y="18.400" font-size="17" font-weight="700" fill="#fff" text-anchor="middle" font-family="Liberation Sans,sans-serif">S</text></g>
 <g fill="none" stroke="#2d6dc0" stroke-width="1.400">
  <!-- zhong -->
  <path d="M26.400 9.600 h9.600 v5 h-9.600 z M31.200 6.600 v11.600" stroke-width="1.600"/>
  <!-- punctuation -->
  <circle cx="46.600" cy="10" r="1.200" stroke-width="1"/><path d="M51.800 12.400 q.8 2.200-1.200 3.600" stroke-width="1.600" stroke-linecap="round"/>
  <!-- smiley -->
  <circle cx="65" cy="12.400" r="5.400"/><path d="M62.400 13.800 q2.600 2.600 5.200 0" stroke-width="1.100"/><path d="M63 10.400 v1.200 M67 10.400 v1.200" stroke-width="1.200"/>
  <!-- mic -->
  <rect x="80.200" y="6.600" width="3.800" height="7.600" rx="1.900" fill="#2d6dc0"/><path d="M78.200 12 q0 4.200 3.900 4.200 q3.900 0 3.900-4.200 M82.100 16.200 v2.600" stroke-width="1.200"/>
  <!-- keyboard -->
  <rect x="92.400" y="8.400" width="12.400" height="8.200" rx="1" fill="#2d6dc0" stroke="none"/>
 </g>
 <path d="M94 10.400 h9.400 M94 12.400 h9.400" stroke="#fff" stroke-width=".9" stroke-dasharray="1.200 .9"/><path d="M95.600 14.600 h6" stroke="#fff" stroke-width=".9"/>
 <!-- person -->
 <circle cx="114" cy="8.400" r="2.300" fill="#2d6dc0"/><path d="M110 18.400 v-4.600 q0-2.800 4-2.800 q2.600 0 3.400 1.600 v5.800 z" fill="#2d6dc0"/><rect x="114.600" y="14" width="6.400" height="4.800" rx=".8" fill="#fff" stroke="#2d6dc0" stroke-width="1"/>
 <!-- shirt -->
 <path d="M128.600 7 l2.600-1.200 q1.800 1.600 3.600 0 l2.600 1.200 l1.800 3 l-2.200 1.400 l-.6-.8 v7.600 h-6.800 v-7.600 l-.6 .8 l-2.200-1.400 z" fill="#2d6dc0"/>
 <!-- grid -->
 <g fill="#2d6dc0"><rect x="143.600" y="7" width="4.600" height="4.600"/><rect x="143.600" y="13" width="4.600" height="4.600"/><rect x="149.600" y="13" width="4.600" height="4.600"/><rect x="150" y="6.600" width="4.200" height="4.200" fill="none" stroke="#2d6dc0" stroke-width="1"/></g>
</svg>
<svg id="cursor" width="14" height="18" viewBox="0 0 14 18" style="left:653px;top:303px">
 <path d="M3.400 8.600 c-1.800-2-.2-3.200 1-2 l.8 .9 v-4.300 c0-1.300 1.600-1.300 1.700 0 c.2-1.300 1.800-1.200 1.800 .1 c.3-1.100 1.700-.9 1.700 .3 v.8 c.4-.9 1.500-.6 1.500 .5 v4.300 c0 2.600-1 4.300-1.600 6.600 h-4.600 c-.3-2.400-1.300-4.200-2.300-7.200 z" fill="#fff" stroke="#222" stroke-width=".8" stroke-linejoin="round"/>
 <path d="M6.900 3.600 v3 M8.700 3.600 v3 M10.400 4.400 v2.600" stroke="#222" stroke-width=".6"/>
</svg>
<div id="status" class="a"></div>
<div class="a" style="left:0;top:652px;width:1215px;height:2px;background:linear-gradient(#f7e4de,#f3d9d2)"></div>
<svg width="240" height="23" viewBox="0 0 240 23" style="left:480px;top:631px">
 <g fill="#111"><path d="M14.800 6.600 v9.600 l-4.800-4.800 z"/><rect x="16.400" y="6.600" width="1.700" height="9.600"/>
 <path d="M37 6.600 v9.600 l-4.800-4.800 z"/>
 <path d="M140 6.600 v9.600 l4.800-4.800 z"/>
 <rect x="156.800" y="6.600" width="1.700" height="9.600"/><path d="M160.200 6.600 v9.600 l4.800-4.800 z"/></g>
 <rect x="45.500" y="4.500" width="86.500" height="14" fill="#fff" stroke="#bdbdbd" stroke-width="1"/>
 <path d="M124.600 10.600 h3.600 l-1.800 2.200 z" fill="#222"/>
 <g fill="#fcfcfc" stroke="#7f8794" stroke-width="1.100"><rect x="175.500" y="6.200" width="7" height="6.600"/><rect x="179" y="10.400" width="7.600" height="7"/></g>
 <path d="M181 4.800 v4.400 M179.200 7.600 l1.800 1.800 l1.800-1.800" fill="none" stroke="#3a8a7a" stroke-width="1.100"/>
 <g fill="#fafafa" stroke="#c9ccd2" stroke-width="1.100"><rect x="196.500" y="6.600" width="7" height="6.600"/><rect x="200" y="10.600" width="7.600" height="7"/></g>
</svg>
<div class="t" style="left:528.500px;top:638px;font-size:9.900px;color:#444">23 / 275</div>
<div class="a" style="left:973.800px;top:635.500px;width:17.800px;height:14.500px;background:#fbc9b2"></div>
<svg width="290" height="23" viewBox="0 0 290 23" style="left:925px;top:631px">
 <circle cx="13.600" cy="11.800" r="4.800" fill="#f7f9fc" stroke="#6e83a8" stroke-width="1.100"/><path d="M13.600 9.200 v2.800 h2.200" fill="none" stroke="#6e83a8" stroke-width="1"/>
 <path d="M22.600 10.800 h3.400 l-1.700 2.100 z" fill="#222"/>
 <rect x="33.500" y="6.300" width="7.600" height="10.600" fill="#fcfcfc" stroke="#9a9a9a" stroke-width="1"/><path d="M35.400 9.400 h3.800 M35.400 11.600 h3.800 M35.400 13.800 h3.800" stroke="#c4c4c4" stroke-width=".8"/>
 <rect x="53.800" y="6" width="7.400" height="5.600" fill="#fdf3ee" stroke="#8a7a78" stroke-width="1"/><rect x="53.800" y="12.600" width="7.400" height="5.600" fill="#fdf3ee" stroke="#8a7a78" stroke-width="1"/>
 <rect x="72.500" y="6.300" width="5.600" height="10.600" fill="#fcfcfc" stroke="#8a8a8a" stroke-width="1"/><rect x="79.300" y="6.300" width="5.600" height="10.600" fill="#fcfcfc" stroke="#8a8a8a" stroke-width="1"/>
 <path d="M93.400 6 h5.600 v11.600 h-5.600 M99 8.400 h4.600 M99 15 h4.600 M93 11.800 h12" fill="none" stroke="#9a9a9a" stroke-width="1"/>
 <path d="M167.400 10.600 h3.400 l-1.700 2.100 z" fill="#222"/>
 <circle cx="179.600" cy="11.800" r="5.200" fill="#fcfcfc" stroke="#555" stroke-width="1.100"/><path d="M177 11.800 h5.200" stroke="#555" stroke-width="1.100"/>
 <path d="M191 11.800 h68" stroke="#555" stroke-width="1.100"/><path d="M226.600 9.400 v4.800" stroke="#555" stroke-width="1"/>
 <rect x="229" y="8" width="2.600" height="7.400" fill="#222"/>
 <circle cx="269.600" cy="11.800" r="5.200" fill="#fcfcfc" stroke="#555" stroke-width="1.100"/><path d="M267 11.800 h5.200 M269.600 9.200 v5.200" stroke="#555" stroke-width="1.100"/>
</svg>
<div class="t" style="left:1042.500px;top:638px;font-size:9.700px;color:#444">155.61%</div>
</div>
<div id="name" class="a">潞河中学</div>
<div id="photo" class="a">
<svg width="119" height="101" viewBox="0 0 119 101" style="left:0;top:0">
 <defs>
  <filter id="bl" x="-20%" y="-20%" width="140%" height="140%"><feGaussianBlur stdDeviation="1.100"/></filter>
  <filter id="bl2" x="-20%" y="-20%" width="140%" height="140%"><feGaussianBlur stdDeviation=".6"/></filter>
  <linearGradient id="wall" x1="0" x2="1"><stop offset="0" stop-color="#477478"/><stop offset=".5" stop-color="#568789"/><stop offset="1" stop-color="#5f8d92"/></linearGradient>
 </defs>
 <rect width="119" height="101" fill="url(#wall)"/>
 <g filter="url(#bl)">
  <!-- left dark door -->
  <rect x="-6" y="-6" width="17" height="113" fill="#2c3a3e"/>
  <rect x="11" y="-6" width="7" height="113" fill="#8d9ea2"/>
  <rect x="18" y="-6" width="3" height="113" fill="#456669"/>
  <!-- notice on wall -->
  <rect x="31" y="4" width="23" height="17" fill="#9db0b3"/>
  <!-- posters -->
  <rect x="63" y="-6" width="18" height="34" fill="#5e93b0"/>
  <rect x="66" y="9" width="10" height="9" fill="#b9cfd8"/>
  <rect x="81" y="-6" width="4" height="66" fill="#c9d3d6"/>
  <rect x="85" y="-6" width="20" height="39" fill="#5a98c4"/>
  <rect x="88" y="3" width="14" height="14" fill="#9fc4dc"/>
  <rect x="85" y="28" width="20" height="5" fill="#2f6aa3"/>
  <!-- white board / fridge -->
  <rect x="81" y="33" width="26" height="32" fill="#cfd3d6"/>
  <!-- shelf on right -->
  <rect x="107" y="-6" width="18" height="70" fill="#567e86"/>
  <rect x="110" y="3" width="15" height="9" fill="#93a7ab"/><rect x="110" y="15" width="15" height="20" fill="#6f8f98"/><rect x="110" y="38" width="15" height="22" fill="#5f90b4"/>
  <!-- flowers / objects -->
  <rect x="91" y="55" width="10" height="9" fill="#c9b5b0"/>
  <!-- blue box -->
  <rect x="89" y="64" width="24" height="11" fill="#3f6fc0"/>
  <rect x="86" y="73" width="39" height="34" fill="#2e3a3e"/>
  <rect x="110" y="80" width="15" height="27" fill="#4a5d63"/>
  <!-- chair -->
  <path d="M-6 72 q14-4 24 0 v36 h-24 z" fill="#1d2224"/>
  <!-- hair -->
  <path d="M58 14 C38 13 35 34 33 50 C31 64 27 72 26 84 L91 84 C90 70 86 62 82 48 C81 30 78 15 58 14 z" fill="#15100f"/>
  <!-- body -->
  <path d="M3 108 C7 86 20 76 40 73 L78 73 C94 77 101 90 104 108 z" fill="#332a2a"/>
  <path d="M48 74 l12 12 l12-12 l-4-6 h-16 z" fill="#1c1718"/>
  <!-- neck -->
  <path d="M49.500 62 h18 v12 l-9 10 l-9-10 z" fill="#cf987f"/>
  <!-- face -->
  <ellipse cx="58.500" cy="47.500" rx="18" ry="21.500" fill="#dca187"/><ellipse cx="58.500" cy="50" rx="11" ry="12" fill="#e6b096" opacity=".7"/>
  <path d="M40 44 C41 26 50 19 60 20 C71 21 77 30 77.500 45 C74 34 68 27 59 27 C50 27 44 34 40 44 z" fill="#15100f"/>
 </g>
 <g filter="url(#bl2)">
  <!-- glasses -->
  <rect x="42.500" y="40" width="13.500" height="7.400" rx="2.500" fill="none" stroke="#5a2f2a" stroke-width="1"/>
  <rect x="61" y="40" width="13.500" height="7.400" rx="2.500" fill="none" stroke="#5a2f2a" stroke-width="1"/>
  <path d="M56 42.500 h5" stroke="#5a2f2a" stroke-width=".9"/>
  <!-- smile -->
  <path d="M51 56.500 q6.500 5 13 0 q-6.500 2.200-13 0 z" fill="#f4ece8" stroke="#b0645a" stroke-width=".9"/>
  <path d="M55.500 52 q2 1 4 0" fill="none" stroke="#b98670" stroke-width=".8"/>
  <!-- lanyard / badge -->
  <path d="M40 86 l-5 14" stroke="#c9c9c9" stroke-width="1.200"/>
  <rect x="67" y="98" width="6" height="3" fill="#c43a3a"/>
  <rect x="114" y="95" width="5" height="6" fill="#c97a80"/>
 </g>
 <g fill="#5a4a48" opacity=".55">
  <circle cx="20" cy="90" r=".7"/><circle cx="28" cy="95" r=".7"/><circle cx="35" cy="88" r=".7"/><circle cx="44" cy="94" r=".7"/><circle cx="52" cy="90" r=".7"/><circle cx="62" cy="96" r=".7"/><circle cx="72" cy="88" r=".7"/><circle cx="80" cy="94" r=".7"/><circle cx="88" cy="90" r=".7"/><circle cx="94" cy="97" r=".7"/><circle cx="30" cy="82" r=".7"/><circle cx="84" cy="82" r=".7"/><circle cx="24" cy="98" r=".7"/><circle cx="76" cy="98" r=".7"/><circle cx="48" cy="99" r=".7"/>
 </g>
</svg>
</div>
</body></html>
